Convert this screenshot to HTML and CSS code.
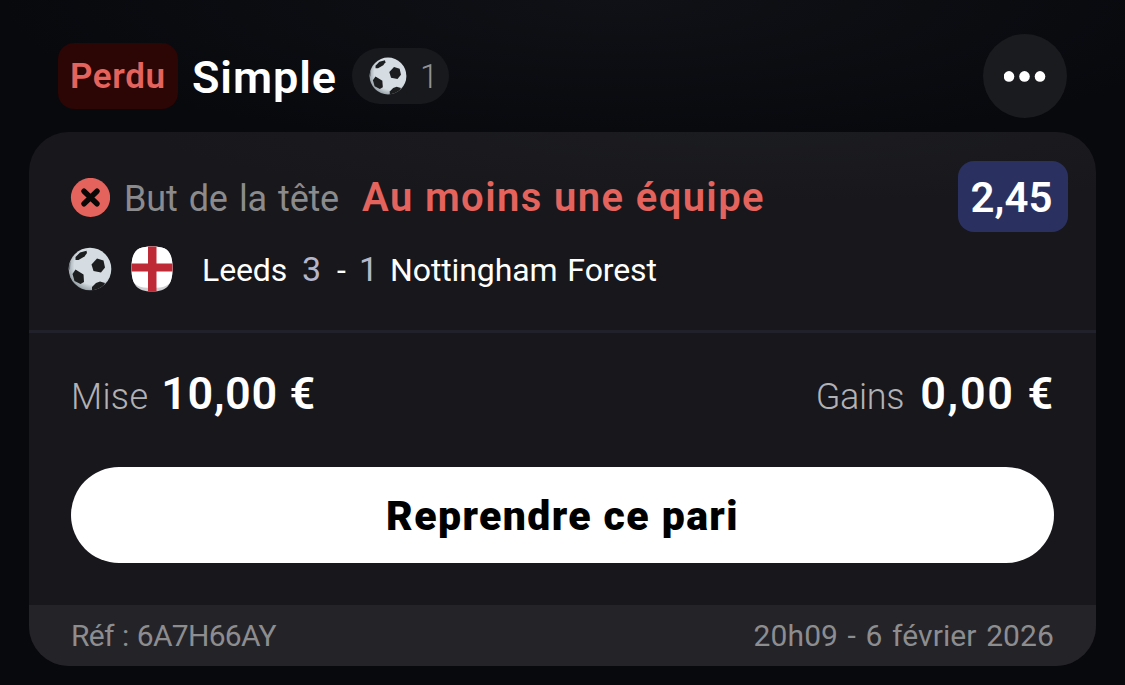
FILE: index.html
```
<!DOCTYPE html>
<html lang="fr">
<head>
    <meta charset="UTF-8">
    <title>Pari simple</title>
    <link rel="stylesheet" href="styles.css">
</head>
<body>
    <!-- Dessin du ballon, réutilisé dans la page -->
    <svg class="symboles" width="0" height="0">
        <defs>
            <radialGradient id="cuir" cx="0.58" cy="0.42" r="0.6">
                <stop offset="0.75" stop-color="#d5dde2" />
                <stop offset="1" stop-color="#98a2a8" />
            </radialGradient>
            <clipPath id="rond"><circle cx="22" cy="22" r="21.3" /></clipPath>
        </defs>
        <symbol id="ballon" viewBox="0 0 44 44">
            <circle cx="22" cy="22" r="21.3" fill="url(#cuir)" />
            <g clip-path="url(#rond)" fill="#1c1d1f">
                <path d="M7.5 10 L12 5.5 L18.5 3.8 L19 6 L16.5 9.5 L10.5 13 L7.5 13 Z" />
                <path d="M23.5 17.5 L29 11.5 L35.5 13.5 L37 20.5 L33 25.5 L25.5 24 Z" />
                <path d="M4.5 27 L7.5 22.5 L15.5 27.5 L16 35 L12.5 37 L6.5 34 Z" />
                <path d="M24 40 L28 36 L32 34.5 L37 36 L34 42 L24 44 Z" />
                <path d="M0 14 L2.5 15 L2 22 L0 24 Z" fill="#747c81" />
            </g>
        </symbol>
    </svg>

    <header class="entete">
        <span class="statut">Perdu</span>
        <h1 class="titre">Simple</h1>
        <div class="compteur">
            <svg class="ballon-petit"><use href="#ballon" /></svg>
            <span class="nombre">1</span>
        </div>
        <button class="menu" aria-label="Options">
            <svg width="42" height="12" viewBox="0 0 42 12" fill="#fff">
                <circle cx="5" cy="6.4" r="5.3" />
                <circle cx="20.5" cy="6.4" r="5.3" />
                <circle cx="36" cy="6.4" r="5.3" />
            </svg>
        </button>
    </header>

    <main class="ticket">
        <section class="selection">
            <div class="pari">
                <svg class="croix" viewBox="0 0 40 40">
                    <circle cx="20.5" cy="19.5" r="19.6" fill="#e5635d" />
                    <path d="M14 13.2 L27 25.8 M27 13.2 L14 25.8" stroke="#0c0707" stroke-width="5.4" stroke-linecap="round" />
                </svg>
                <div class="libelle">
                    <span class="marche">But de la tête</span>
                    <span class="choix">Au moins une équipe</span>
                </div>
                <span class="cote">2,45</span>
            </div>
            <div class="match">
                <svg class="ballon-grand"><use href="#ballon" /></svg>
                <svg class="drapeau" viewBox="0 0 42 46">
                    <clipPath id="forme"><path d="M21 0.5 C35 0.5 41.5 4 41.5 22 C41.5 39 36 45.5 21 45.5 C6 45.5 0.5 39 0.5 22 C0.5 4 7 0.5 21 0.5 Z" /></clipPath>
                    <g clip-path="url(#forme)">
                        <rect width="42" height="46" fill="#cfcfd1" />
                        <path d="M0 0 H42 V31 C40 39 34 42 21 42 C8 42 2 39 0 31 Z" fill="#fff" />
                        <path d="M17 0 H25.5 V46 H17 Z M0 17.5 H42 V25.5 H0 Z" fill="#bf2a37" />
                    </g>
                </svg>
                <div class="equipes">
                    <span class="domicile">Leeds</span>
                    <span class="score">3</span>
                    <span class="tiret">-</span>
                    <span class="score score-ext">1</span>
                    <span class="exterieur">Nottingham Forest</span>
                </div>
            </div>
        </section>

        <section class="resume">
            <div class="montants">
                <div class="montant">
                    <span class="mise-titre">Mise</span>
                    <strong class="mise">10,00 €</strong>
                </div>
                <div class="montant">
                    <span class="gains-titre">Gains</span>
                    <strong class="gains">0,00 €</strong>
                </div>
            </div>
            <button class="reprendre">Reprendre ce pari</button>
        </section>

        <footer class="pied">
            <span class="reference">Réf : 6A7H66AY</span>
            <span class="date">20h09 - 6 février 2026</span>
        </footer>
    </main>
</body>
</html>
```
FILE: styles.css
```
* {
    box-sizing: border-box;
}

body {
    margin: 0;
    padding: 34px 29px 0;
    height: 685px;
    overflow: hidden;
    font-family: Roboto, "Liberation Sans", sans-serif;
    color: #fff;
    background: radial-gradient(ellipse 620px 150px at 620px 0, #101116, #08090d);
    white-space: nowrap;
}

button {
    border: none;
    padding: 0;
    font-family: inherit;
    cursor: pointer;
}

.symboles {
    position: absolute;
}

/* En-tête */
.entete {
    display: flex;
    align-items: center;
    height: 84px;
    padding: 0 29px;
}

.statut {
    width: 120px;
    height: 66px;
    padding-left: 12px;
    border-radius: 16px;
    background-color: #2c0505;
    color: #e5635d;
    font-size: 35px;
    font-weight: 600;
    line-height: 68px;
    letter-spacing: 0.6px;
}

.titre {
    width: 160px;
    margin: 0 0 0 14px;
    padding-top: 3px;
    font-size: 45px;
    font-weight: 600;
    line-height: 66px;
    letter-spacing: 0.9px;
}

.compteur {
    display: flex;
    align-items: center;
    gap: 13px;
    width: 97px;
    height: 56px;
    padding-left: 17px;
    border-radius: 28px;
    background-color: #18191d;
}

.ballon-petit {
    width: 38px;
    height: 38px;
}

.nombre {
    color: #929295;
    font-size: 33px;
    font-weight: 300;
}

.menu {
    display: flex;
    align-items: center;
    justify-content: center;
    width: 84px;
    height: 84px;
    margin-left: auto;
    border-radius: 50%;
    background-color: #1a1b1e;
}

/* Ticket */
.ticket {
    height: 534px;
    margin-top: 14px;
    border-radius: 40px;
    overflow: hidden;
    background: radial-gradient(ellipse 600px 70px at 720px 0, #1b1c20, #18171c);
}

.selection {
    height: 201px;
    padding: 29px 28px 0 39px;
    border-bottom: 3px solid #20212b;
}

.pari {
    display: flex;
    align-items: center;
    height: 71px;
}

.croix {
    width: 40px;
    height: 40px;
    margin: 2px 0 0 2px;
}

.libelle {
    display: flex;
    align-items: baseline;
    margin-left: 14px;
    padding-top: 2px;
}

.marche {
    width: 238px;
    color: #8b8b8e;
    font-size: 36px;
    letter-spacing: -0.2px;
    word-spacing: 2.5px;
}

.choix {
    color: #e5635d;
    font-size: 40px;
    font-weight: 600;
    letter-spacing: 1.4px;
}

.cote {
    width: 110px;
    height: 71px;
    margin-left: auto;
    padding-right: 3px;
    border-radius: 16px;
    background-color: #2a3160;
    font-size: 42px;
    font-weight: 600;
    line-height: 73px;
    text-align: center;
}

.match {
    display: flex;
    align-items: center;
    height: 46px;
    margin-top: 14px;
}

.ballon-grand {
    width: 44px;
    height: 44px;
}

.drapeau {
    width: 42px;
    height: 46px;
    margin-left: 19px;
}

.equipes {
    display: flex;
    align-items: baseline;
    margin-left: 29px;
    font-size: 32px;
    letter-spacing: -0.1px;
}

.domicile {
    width: 100px;
}

.score {
    width: 35px;
    color: #b6b6cb;
    font-size: 34px;
}

.tiret {
    width: 22px;
}

.score-ext {
    width: 31px;
}

.exterieur {
    word-spacing: 2px;
}

/* Montants et bouton */
.resume {
    height: 272px;
    padding: 34px 42px 0;
}

.montants {
    display: flex;
    justify-content: space-between;
    height: 100px;
}

.montant {
    display: flex;
    align-items: baseline;
    color: #b2b2b5;
    font-size: 36px;
    font-weight: 300;
}

.mise-titre {
    margin-right: 13px;
    letter-spacing: 0.3px;
}

.gains-titre {
    margin-right: 16px;
    letter-spacing: -0.3px;
}

.montant strong {
    color: #fff;
    font-size: 45px;
    font-weight: 600;
}

.montant .mise {
    letter-spacing: 0.6px;
}

.montant .gains {
    letter-spacing: 1.7px;
    margin-right: -1px;
}

.reprendre {
    display: block;
    width: 983px;
    height: 96px;
    padding-top: 2px;
    border-radius: 48px;
    background-color: #fff;
    color: #000;
    font-size: 41px;
    font-weight: 900;
    letter-spacing: 1.4px;
}

/* Pied du ticket */
.pied {
    display: flex;
    align-items: center;
    justify-content: space-between;
    height: 61px;
    padding: 0 42px;
    background-color: #242328;
    color: #8d8d90;
    font-size: 30px;
}

.reference {
    letter-spacing: -0.7px;
    word-spacing: 1.5px;
}

.date {
    letter-spacing: 0.1px;
    word-spacing: 2px;
}
```
